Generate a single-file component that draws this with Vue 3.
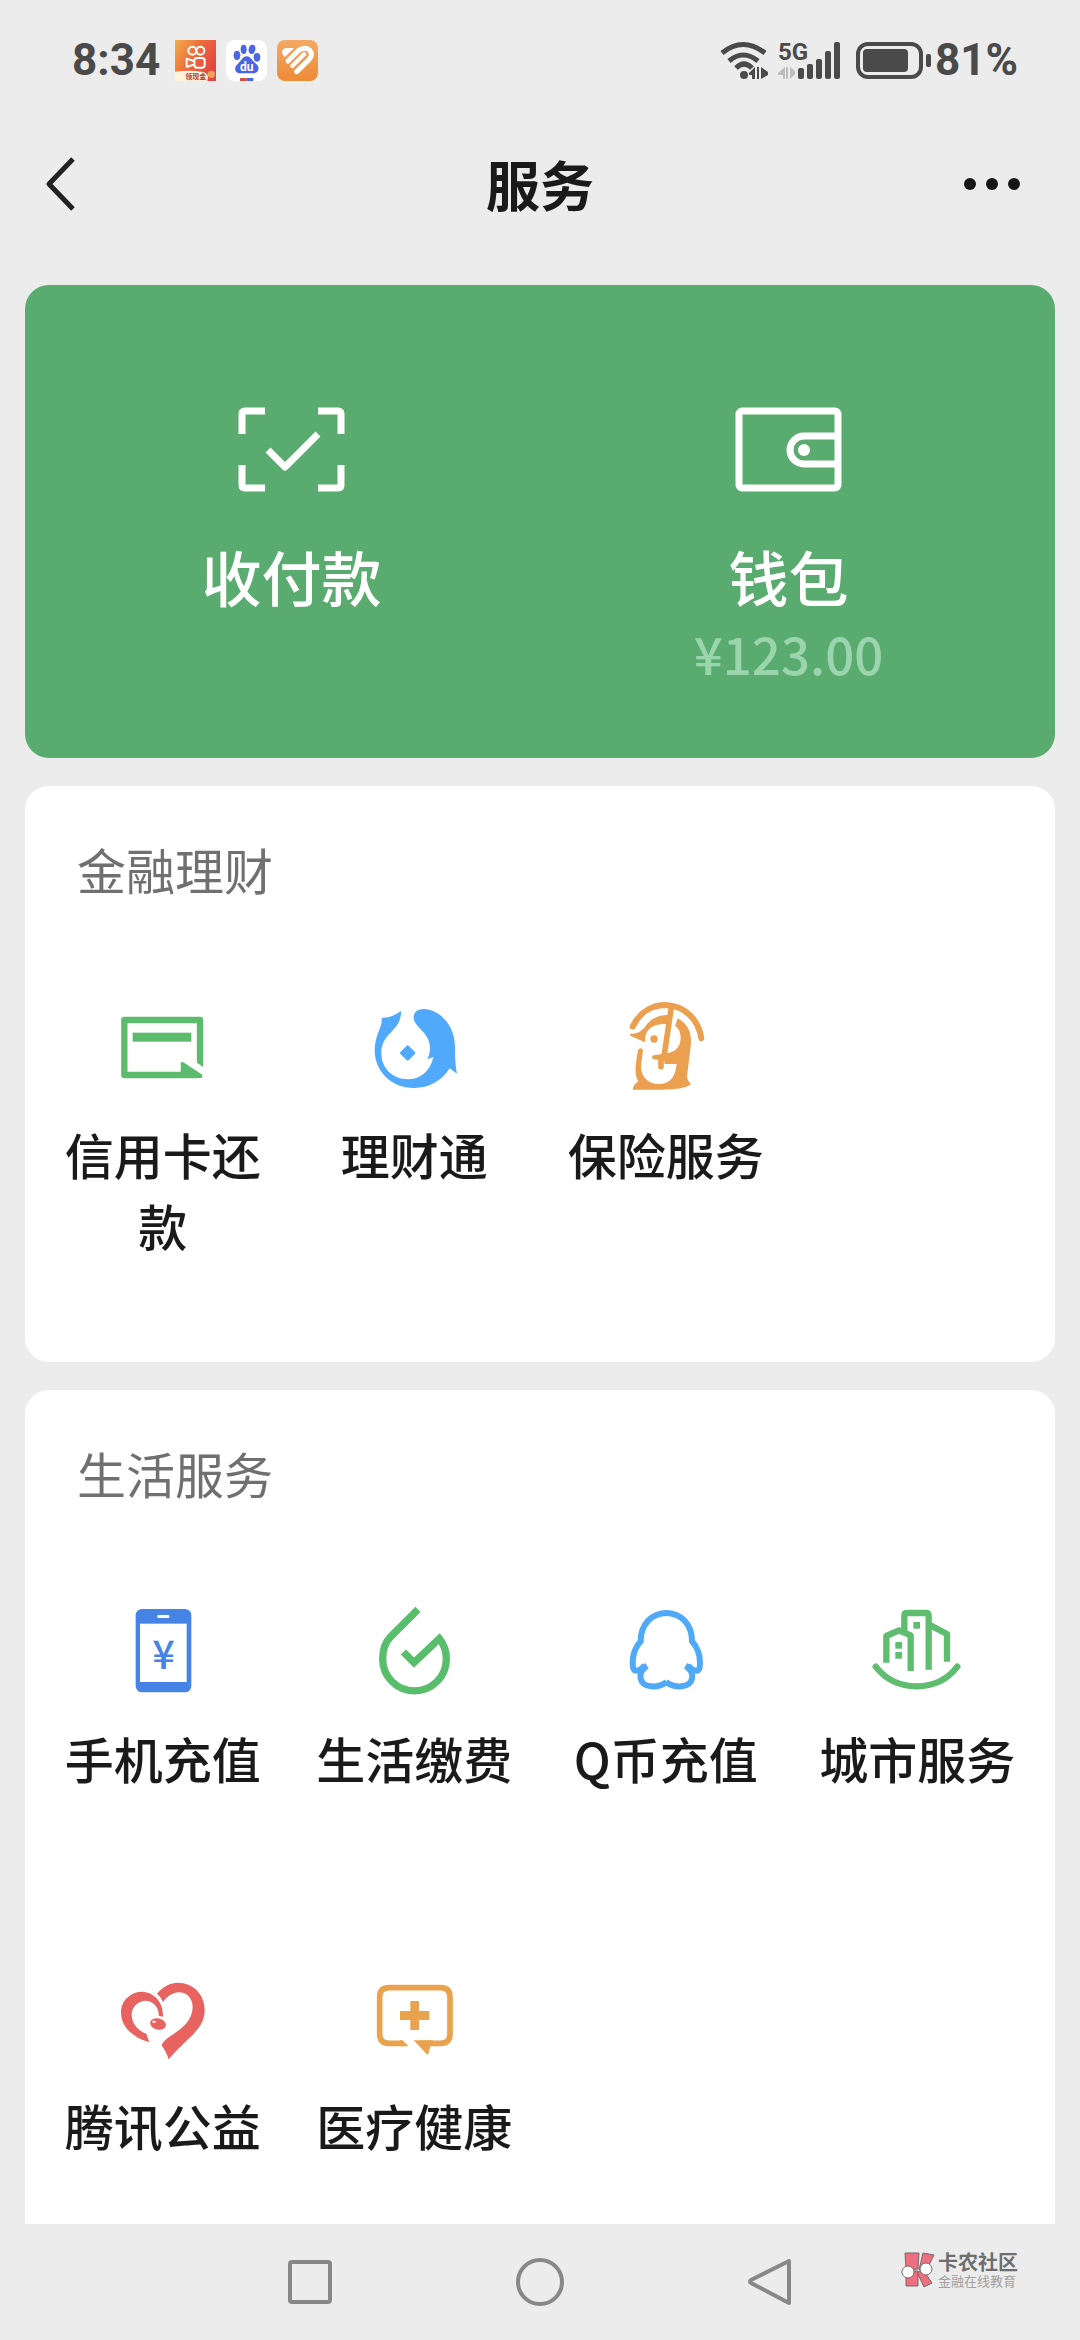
<script setup>
const sections = [
  {
    title: '金融理财',
    items: [
      { icon: 'card', label: '信用卡还款' },
      { icon: 'licaitong', label: '理财通' },
      { icon: 'insurance', label: '保险服务' },
    ],
  },
  {
    title: '生活服务',
    items: [
      { icon: 'phone', label: '手机充值' },
      { icon: 'drop', label: '生活缴费' },
      { icon: 'penguin', label: 'Q币充值' },
      { icon: 'city', label: '城市服务' },
      { icon: 'heart', label: '腾讯公益' },
      { icon: 'medical', label: '医疗健康' },
    ],
  },
]
</script>

<template>
  <div class="page">
    <svg class="sprite" aria-hidden="true">
      <symbol id="card" viewBox="224 120 288 288">
        <g fill="#5cbb6c">
          <path d="M479 300V180H252V345H470" fill="none" stroke="#5cbb6c" stroke-width="19" stroke-linejoin="round" />
          <path d="M470 290H488V321L470 308Z" />
          <path d="M421 308Q423 304 429 307L484 343Q489 348 484 354H421Z" />
          <rect x="277" y="218" width="176" height="27" />
        </g>
      </symbol>
      <symbol id="licaitong" viewBox="979 120 288 288">
        <g fill="#50a9fb">
          <path d="M1026 173Q1052 176 1084 153C1086 215 1025 215 1025 280C1025 325 1060 358 1104 358C1140 358 1172 335 1181 291L1163 298C1176 272 1174 240 1150 215C1130 195 1122 185 1122 172C1122 155 1135 147 1152 147C1200 149 1246 195 1246 262C1246 300 1248 318 1252 341L1230 325C1205 365 1165 384 1125 384C1050 384 1005 330 1005 270C1005 225 1030 200 1026 173Z" />
          <path d="M1104 260L1123 279L1104 298L1085 279Z" stroke="#50a9fb" stroke-width="8" stroke-linejoin="round" />
        </g>
      </symbol>
      <symbol id="insurance" viewBox="533 120 288 288">
        <g fill="#eba04f">
          <path d="M577 200C600 152 640 135 676 135C735 137 775 180 783 235" fill="none" stroke="#eba04f" stroke-width="18" stroke-linecap="round" />
          <path d="M693 142L671 290M662 298V320" fill="none" stroke="#eba04f" stroke-width="17" stroke-linecap="round" />
          <path d="M570 221C590 222 600 215 612 203C630 175 655 164 684 165L680 192C640 190 612 205 614 247L573 229Q566 224 570 221Z" />
          <path d="M712 175C740 190 754 215 752 250L740 350Q742 364 752 371C745 384 700 389 650 389H577C579 376 586 370 594 364C582 345 584 320 593 270Q600 260 608 270L602 318C602 355 628 372 655 372C690 372 705 350 709 312H672V303L637 297Q632 290 640 286L680 280C705 275 720 262 721 235C721 215 714 203 704 198Z" />
          <circle cx="641" cy="237" r="11" />
        </g>
      </symbol>
      <symbol id="phone" viewBox="224 132 288 288">
        <rect x="286" y="147" width="167" height="250" rx="19" fill="#4584e4" />
        <rect x="299" y="191" width="140" height="175" fill="#fff" />
        <rect x="351" y="165" width="36" height="9" rx="3" fill="#fff" />
        <text class="yen" x="370" y="326" text-anchor="middle">¥</text>
      </symbol>
      <symbol id="drop" viewBox="979 132 288 288">
        <path d="M1135 148L1053 230C1037 246 1029 270 1029 297A95 95 0 0 0 1220 297C1220 273 1212 252 1199 236L1123 308L1091 276" fill="none" stroke="#58be6b" stroke-width="22" />
      </symbol>
      <symbol id="penguin" viewBox="0 0 288 288">
        <g id="penguin-side" fill="none" stroke="#50a9f6" stroke-width="18">
          <path d="M146 27C102 27 68 60 68 112C52 130 44 150 44 176C44 190 46 200 53 200C62 200 70 196 80 184" />
          <path d="M82 190C66 200 66 212 68 224C74 252 118 254 146 234" />
          <path d="M78 180L88 196" stroke-width="10" />
        </g>
        <use href="#penguin-side" transform="translate(290 0) scale(-1 1)" />
      </symbol>
      <symbol id="city" viewBox="0 0 288 288">
        <g fill="none" stroke="#5fbd6f" stroke-width="19">
          <path d="M20 188Q66 247 143 247Q220 247 265 188" stroke-linecap="round" />
          <path d="M106 88V35Q106 27 114 27H171Q179 27 179 35V197" />
          <path d="M52 176V96L90 79L125 94V201" stroke-linejoin="round" />
          <path d="M184 64L234 90V173" stroke-linejoin="round" />
        </g>
        <g fill="#5fbd6f">
          <rect x="133" y="54" width="20" height="20" />
          <rect x="79" y="114" width="20" height="20" />
          <rect x="79" y="144" width="20" height="20" />
        </g>
      </symbol>
      <symbol id="heart" viewBox="224 63 288 288">
        <g fill="#e8635f">
          <path d="M327 277C270 260 240 225 242 182C245 147 275 125 305 125C345 127 370 160 368 200L355 197C357 172 338 152 314 152C290 154 273 172 274 197C276 225 298 244 318 251Z" />
          <path d="M350 131C370 108 390 98 412 98C460 98 493 135 493 180C493 240 440 262 385 328C380 310 372 300 364 286C372 255 455 240 457 172C457 142 437 125 412 127C395 129 380 140 368 156Q362 140 350 131Z" />
          <ellipse cx="353" cy="222" rx="24" ry="17" transform="rotate(14 353 222)" />
        </g>
        <ellipse cx="341" cy="215" rx="6" ry="3" fill="#fff" />
      </symbol>
      <symbol id="medical" viewBox="979 63 288 288">
        <g fill="#e9a34f">
          <path d="M1092 280H1048Q1020 280 1020 252V141Q1020 113 1048 113H1203Q1231 113 1231 141V252Q1231 280 1203 280H1140" fill="none" stroke="#e9a34f" stroke-width="17" />
          <path d="M1088 271L1107 289H1080V271Z" />
          <path d="M1122 271H1180L1172 289L1166 312Q1163 315 1160 311Z" />
          <path d="M1112 153H1138V183H1169V210H1138V240H1112V210H1081V183H1112Z" />
        </g>
      </symbol>
    </svg>

    <header>
      <div class="status">
        <div class="status-left">
          <span class="status-text">8:34</span>
          <svg class="app-icon" viewBox="45 60 123 123" aria-label="快手">
            <defs>
              <linearGradient id="ks" x1="0" y1="0" x2="1" y2="0.6">
                <stop offset="0" stop-color="#f2b04a" />
                <stop offset="0.5" stop-color="#ee6b3c" />
                <stop offset="1" stop-color="#e5443f" />
              </linearGradient>
            </defs>
            <rect x="45" y="60" width="123" height="123" fill="url(#ks)" />
            <g fill="none" stroke="#fff" stroke-width="6">
              <circle cx="97" cy="92" r="12" />
              <circle cx="121" cy="92" r="12" />
              <rect x="103" y="114" width="31" height="29" rx="8" />
              <path d="M101 123L80 116V141L101 134" stroke-linejoin="round" />
            </g>
            <path d="M45 155Q90 150 125 155Q150 158 142 183H45Z" fill="#fff3dc" />
            <circle cx="154" cy="163" r="11" fill="#f0a35a" />
            <text class="ks-text" x="76" y="177">领现金</text>
          </svg>
          <svg class="app-icon" viewBox="197 60 123 123" aria-label="百度">
            <rect x="197" y="60" width="123" height="123" rx="26" fill="#fff" />
            <g fill="#4a66e2">
              <ellipse cx="230" cy="106" rx="10" ry="14" />
              <ellipse cx="250" cy="88" rx="9" ry="14" />
              <ellipse cx="275" cy="88" rx="10" ry="14" transform="rotate(12 275 88)" />
              <ellipse cx="290" cy="112" rx="10" ry="13" />
              <path d="M259 109C272 109 276 124 288 132C302 145 292 162 276 160H242C224 162 218 145 232 132C243 124 246 109 259 109Z" />
              <rect x="259" y="174" width="20" height="9" />
            </g>
            <rect x="239" y="174" width="20" height="9" fill="#cf5149" />
            <text class="du-text" x="259" y="153" text-anchor="middle">du</text>
          </svg>
          <svg class="app-icon" viewBox="351 60 123 123" aria-hidden="true">
            <defs>
              <linearGradient id="ht" x1="0" y1="0" x2="0" y2="1">
                <stop offset="0" stop-color="#f3a964" />
                <stop offset="1" stop-color="#ee8b37" />
              </linearGradient>
            </defs>
            <rect x="351" y="60" width="123" height="123" rx="24" fill="url(#ht)" />
            <path d="M367 101Q363 84 383 84H402L374 112Z" fill="#fff" />
            <path d="M384 123L416 91Q434 79 449 90Q460 104 447 119L410 155" fill="none" stroke="#fff" stroke-width="15" stroke-linecap="round" stroke-linejoin="round" />
            <path d="M397 138L432 103" stroke="#fff" stroke-width="13" stroke-linecap="round" />
          </svg>
        </div>
        <div class="status-right">
          <svg class="wifi" width="49" height="37" viewBox="0 0 49 37" aria-label="Wi-Fi">
            <g fill="none" stroke="#4a4a4a" stroke-width="5">
              <path d="M2 11Q23-6 45 11" />
              <path d="M9 19Q23 7 38 19" />
              <path d="M16 26Q24 18 32 26" />
            </g>
            <g fill="#4a4a4a">
              <circle cx="24" cy="33" r="4" />
              <path d="M35 25V37H32V33H29V31Z" />
              <path d="M37 25V37H39V25ZM41 25L48 30V33L41 37Z" />
            </g>
          </svg>
          <svg class="signal" width="63" height="37" viewBox="0 0 63 37" aria-label="5G">
            <text class="net" x="0" y="18">5G</text>
            <path d="M0 31L7 25V37H5V33H0ZM8 25H10V37H8ZM12 25L17 29V32L12 37Z" fill="#bdbdbd" />
            <g fill="#4a4a4a">
              <rect x="20" y="26" width="6" height="11" rx="2" />
              <rect x="29" y="22" width="6" height="15" rx="2" />
              <rect x="38" y="17" width="6" height="20" rx="2" />
              <rect x="47" y="9" width="6" height="28" rx="2" />
              <rect x="56" y="0" width="6" height="37" rx="2" />
            </g>
          </svg>
          <svg class="battery" width="75" height="37" viewBox="0 0 75 37" aria-hidden="true">
            <rect x="2" y="2" width="63" height="33" rx="10" fill="none" stroke="#4a4a4a" stroke-width="4" />
            <rect x="7" y="7" width="45" height="23" rx="4" fill="#4a4a4a" />
            <rect x="70" y="12" width="5" height="13" rx="2" fill="#4a4a4a" />
          </svg>
          <span class="status-text">81%</span>
        </div>
      </div>

      <div class="titlebar">
        <button class="bar-btn" aria-label="返回">
          <svg width="30" height="54" viewBox="0 0 30 54">
            <path d="M27 2L3 27L27 52" fill="none" stroke="#222" stroke-width="5" stroke-linejoin="round" />
          </svg>
        </button>
        <h1>服务</h1>
        <button class="bar-btn end" aria-label="更多">
          <svg width="56" height="12" viewBox="0 0 56 12" fill="#161616">
            <circle cx="6" cy="6" r="6" />
            <circle cx="28" cy="6" r="6" />
            <circle cx="50" cy="6" r="6" />
          </svg>
        </button>
      </div>
    </header>

    <main>
      <section class="pay">
        <button class="pay-item">
          <svg width="107" height="85" viewBox="0 0 107 85" fill="none" stroke="#fff" stroke-width="7">
            <path d="M4 27V7Q4 4 7 4H27M80 4H100Q103 4 103 7V27M103 58V78Q103 81 100 81H80M27 81H7Q4 81 4 78V58" />
            <path d="M30 43L47 60L80 27" stroke-linejoin="round" />
          </svg>
          <span class="pay-label">收付款</span>
        </button>
        <button class="pay-item">
          <svg width="107" height="85" viewBox="0 0 107 85" fill="none" stroke="#fff" stroke-width="7">
            <rect x="4" y="4" width="99" height="77" rx="3" />
            <path d="M103 29H69A14 14 0 0 0 69 57H103" />
            <circle cx="69" cy="43" r="6" fill="#fff" stroke="none" />
          </svg>
          <span class="pay-label">钱包</span>
          <span class="amount">¥123.00</span>
        </button>
      </section>

      <section v-for="s in sections" :key="s.title" class="card">
        <h2>{{ s.title }}</h2>
        <div class="grid">
          <button v-for="item in s.items" :key="item.label" class="item">
            <svg class="icon" aria-hidden="true"><use :href="'#' + item.icon" /></svg>
            <span>{{ item.label }}</span>
          </button>
        </div>
      </section>
    </main>

    <nav class="navbar">
      <button aria-label="最近任务">
        <svg width="48" height="48" viewBox="0 0 48 48"><rect x="4" y="4" width="40" height="40" rx="2" /></svg>
      </button>
      <button aria-label="主页">
        <svg width="48" height="48" viewBox="0 0 48 48"><circle cx="24" cy="24" r="22" /></svg>
      </button>
      <button aria-label="后退">
        <svg width="48" height="48" viewBox="0 0 48 48"><path d="M43 3V45L5 25Q3 24 5 22Z" stroke-linejoin="round" /></svg>
      </button>
      <div class="brand">
        <svg width="35" height="36" viewBox="0 0 35 36" stroke="#77686c" stroke-width="1">
          <g fill="#ee6f7f">
            <path d="M5 1H19L18 17L6 18Z" />
            <path d="M23 1L34 3L27 17L19 18Z" />
            <path d="M6 19L18 19V34H6Z" />
            <path d="M17 20L24 19L32 31L24 35Z" />
          </g>
          <g fill="#fff">
            <circle cx="8" cy="20" r="6" />
            <circle cx="26" cy="17" r="6" />
          </g>
        </svg>
        <div class="brand-text">
          <strong>卡农社区</strong>
          <small>金融在线教育</small>
        </div>
      </div>
    </nav>
  </div>
</template>

<style>
body {
  margin: 0;
  background: #ececec;
}
</style>

<style scoped>
.page {
  display: flex;
  flex-direction: column;
  min-height: 100vh;
  background: #ececec;
  color: #1a1a1a;
  font-family: "Noto Sans CJK SC", sans-serif;
}

.sprite {
  position: absolute;
  width: 0;
  height: 0;
}

svg {
  display: block;
  flex: none;
  overflow: visible;
}

button {
  margin: 0;
  padding: 0;
  border: 0;
  background: none;
  color: inherit;
  font: inherit;
}

.status {
  display: flex;
  justify-content: space-between;
  align-items: center;
  height: 120px;
  padding: 0 62px 0 72px;
}

.status-left,
.status-right {
  display: flex;
  align-items: center;
}

.status-left {
  gap: 10px;
}

.status-text {
  color: #4a4a4a;
  font: 700 44px/48px Roboto, sans-serif;
}

.status-left .status-text {
  margin-right: 5px;
}

.app-icon {
  width: 41px;
  height: 41px;
}

.ks-text {
  fill: #b5372c;
  font: 700 21px "Noto Sans CJK SC", sans-serif;
}

.du-text {
  fill: #fff;
  font: 700 36px Roboto, sans-serif;
}

.signal {
  margin: 0 15px 0 9px;
}

.battery {
  margin-right: 4px;
}

.net {
  fill: #4a4a4a;
  font: 700 24px Roboto, sans-serif;
}

.titlebar {
  display: grid;
  grid-template-columns: 1fr auto 1fr;
  align-items: center;
  height: 128px;
  padding: 0 46px;
}

.bar-btn {
  justify-self: start;
}

.bar-btn.end {
  justify-self: end;
  padding-right: 14px;
}

h1 {
  margin: 0;
  font-size: 54px;
  line-height: 70px;
  font-weight: 700;
}

main {
  display: flex;
  flex: 1;
  flex-direction: column;
  gap: 28px;
  padding: 37px 25px 0;
}

.pay {
  display: flex;
  padding: 122px 18px 75px;
  border-radius: 24px;
  background: #59ab6f;
  color: #fff;
}

.pay-item {
  display: flex;
  flex: 1;
  flex-direction: column;
  align-items: center;
  justify-content: flex-start;
}

.pay-label {
  margin-top: 44px;
  font-size: 60px;
  line-height: 80px;
  font-weight: 500;
}

.amount {
  margin-top: 7px;
  color: #9bd5ae;
  font-size: 51px;
  line-height: 60px;
  font-weight: 500;
}

.card {
  padding: 47px 12px 102px;
  border-radius: 24px;
  background: #fff;
}

.card:last-child {
  flex: 1;
  padding-bottom: 62px;
  border-radius: 24px 24px 0 0;
}

h2 {
  margin: 0 0 96px;
  padding-left: 40px;
  color: #707070;
  font-size: 49px;
  line-height: 71px;
  font-weight: 400;
}

.grid {
  display: grid;
  grid-template-columns: repeat(4, 1fr);
  row-gap: 178px;
}

.item {
  display: flex;
  flex-direction: column;
  align-items: center;
  justify-content: flex-start;
  gap: 22px;
  padding: 0 20px;
  font-size: 49px;
  line-height: 71px;
  font-weight: 500;
}

.icon {
  width: 96px;
  height: 96px;
}

.yen {
  fill: #4584e4;
  font: 500 119px "Noto Sans CJK SC", sans-serif;
}

.navbar {
  position: relative;
  display: flex;
  justify-content: center;
  align-items: center;
  gap: 182px;
  height: 116px;
}

.navbar button svg {
  fill: none;
  stroke: #888;
  stroke-width: 4;
}

.brand {
  position: absolute;
  top: 28px;
  right: 62px;
  display: flex;
  gap: 3px;
}

.brand-text {
  display: flex;
  flex-direction: column;
}

.brand strong {
  color: #6e6e6e;
  font-size: 20px;
  line-height: 20px;
}

.brand small {
  color: #a0a0a0;
  font-size: 13px;
  line-height: 18px;
}
</style>
